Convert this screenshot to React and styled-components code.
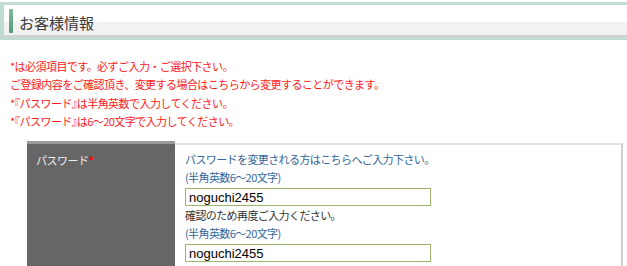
import React from "react";
import styled, { createGlobalStyle } from "styled-components";

const Global = createGlobalStyle`
  html, body { margin: 0; padding: 0; background: #fff; }
  body { font-family: "Noto Sans CJK JP", "Liberation Sans", sans-serif; overflow: hidden; }
`;

const Page = styled.div`
  padding-top: 2px;
  width: 627px;
`;

const Header = styled.div`
  border: 3px solid #c0dcd2;
  border-left-width: 4px;
  border-right: none;
  height: 32px;
  display: flex;
  align-items: center;
  gap: 5px;
  padding-left: 5px;
  background: linear-gradient(#fff 0, #fff 17px, #f2f2f2 17px, #f2f2f2 30px, #d2d2d2 30px);
`;

const Accent = styled.span`
  width: 4px;
  height: 24px;
  background: linear-gradient(#7cbc9e, #4f9a78);
  border-radius: 1px;
`;

const HeaderTitle = styled.h2`
  margin: 0;
  font-size: 15px;
  font-weight: normal;
  color: #3a3a3a;
  line-height: 1;
  padding-top: 2px;
  padding-left: 1px;
`;

const Notes = styled.div`
  margin: 17px 0 0 10px;
  color: #ff1a1a;
  font-size: 11px;
  letter-spacing: -0.55px;
  line-height: 18.3px;
`;

const Bracket = styled.span`
  font-feature-settings: "halt";
`;

const Table = styled.div`
  margin: 11px 4px 0 27px;
  display: grid;
  grid-template-columns: 148px 1fr;
`;

const Th = styled.div`
  background: #666;
  border-top: 3px solid #999;
  color: #f0f0f0;
  font-size: 11px;
  letter-spacing: -0.5px;
  padding: 8px 0 0 9px;
  min-height: 120px;
`;

const Req = styled.span`
  color: #ff0000;
  font-weight: bold;
`;

const Td = styled.div`
  margin-top: 2px;
  border-top: 2px solid #e0e0e0;
  border-right: 2px solid #cfcfcf;
  padding: 5px 0 0 10px;
  display: flex;
  flex-direction: column;
  align-items: flex-start;
`;

const Line = styled.div`
  font-size: 11px;
  letter-spacing: -0.6px;
  line-height: 18px;
  color: ${(p) => (p.$blue ? "#336699" : "#333")};
`;

const Input = styled.input`
  box-sizing: border-box;
  width: 246px;
  height: 18px;
  margin: 2px 0 0;
  border: 1px solid #9bb56c;
  padding: 0 0 0 3px;
  font-family: "Liberation Sans", sans-serif;
  font-size: 13px;
  color: #000;
  outline: none;
`;

const Pw = () => (
  <>
    <Bracket>『</Bracket>パスワード<Bracket>』</Bracket>
  </>
);

export default function App() {
  return (
    <Page>
      <Global />
      <Header>
        <Accent />
        <HeaderTitle>お客様情報</HeaderTitle>
      </Header>
      <Notes>
        <div>*は必須項目です。必ずご入力・ご選択下さい。</div>
        <div>ご登録内容をご確認頂き、変更する場合はこちらから変更することができます。</div>
        <div>*<Pw />は半角英数で入力してください。</div>
        <div>*<Pw />は6～20文字で入力してください。</div>
      </Notes>
      <Table>
        <Th>
          パスワード<Req>*</Req>
        </Th>
        <Td>
          <Line $blue>パスワードを変更される方はこちらへご入力下さい。</Line>
          <Line $blue>(半角英数6～20文字)</Line>
          <Input type="text" defaultValue="noguchi2455" />
          <Line>確認のため再度ご入力ください。</Line>
          <Line $blue>(半角英数6～20文字)</Line>
          <Input type="text" defaultValue="noguchi2455" />
        </Td>
      </Table>
    </Page>
  );
}
